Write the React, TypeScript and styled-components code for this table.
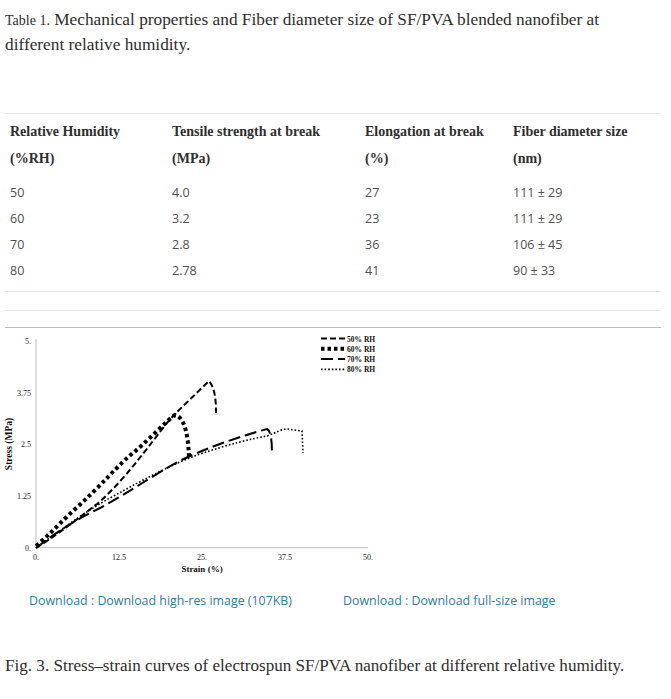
import React from "react";
import styled, { createGlobalStyle } from "styled-components";

const GlobalStyle = createGlobalStyle`
  html, body { margin: 0; padding: 0; background: #ffffff; }
  body { font-family: "Liberation Serif", serif; }
`;

const Page = styled.div`
  width: 671px;
  box-sizing: border-box;
  padding: 8px 10px 0 5px;
`;

const Title = styled.p`
  margin: 0;
  max-width: 625px;
  font-family: "Liberation Serif", serif;
  font-size: 17.3px;
  line-height: 24px;
  color: #2e2e2e;
`;

const TitleLabel = styled.span`
  font-size: 14px;
`;

const Table = styled.div`
  margin-top: 56px;
  border-top: 1px solid #e6e6e6;
  border-bottom: 1px solid #e6e6e6;
  display: grid;
  grid-template-columns: 162px 193px 148px 1fr;
  padding: 4px 0 7px;
`;

const HeadCell = styled.div`
  padding: 0 5px;
  font-family: "Liberation Serif", serif;
  font-weight: bold;
  font-size: 14px;
  color: #2e2e2e;
  height: 27px;
  line-height: 27px;
`;

const HeadGap = styled.div`
  grid-column: 1 / -1;
  height: 8px;
`;

const Cell = styled.div`
  padding: 0 5px;
  font-family: "Open Sans", sans-serif;
  font-size: 12.5px;
  color: #505050;
  height: 26px;
  line-height: 26px;
`;

const Rule = styled.div<{ $tone: string; $gap: number }>`
  margin-top: ${(p) => p.$gap}px;
  border-top: 1px solid ${(p) => p.$tone};
`;

const Figure = styled.div`
  padding-top: 3px;
`;

const Chart = styled.svg`
  display: block;
  overflow: visible;
`;

const Links = styled.div`
  display: flex;
  gap: 51px;
  padding: 9px 0 0 24px;
`;

const Link = styled.a`
  font-family: "Open Sans", sans-serif;
  font-size: 12.4px;
  color: #2e7ca3;
  text-decoration: none;
`;

const Caption = styled.p`
  margin: 45px 0 0;
  font-family: "Liberation Serif", serif;
  font-size: 17.1px;
  line-height: 24px;
  color: #2e2e2e;
`;

const X0 = 36;
const Y0 = 546.7;
const px = (u: number) => X0 + u * 6.64;
const py = (v: number) => Y0 - v * 41.3;

const headers: [string, string][] = [
  ["Relative Humidity", "(%RH)"],
  ["Tensile strength at break", "(MPa)"],
  ["Elongation at break", "(%)"],
  ["Fiber diameter size", "(nm)"],
];

const rows = [
  ["50", "4.0", "27", "111 ± 29"],
  ["60", "3.2", "23", "111 ± 29"],
  ["70", "2.8", "36", "106 ± 45"],
  ["80", "2.78", "41", "90 ± 33"],
];

const xTicks = ["0.", "12.5", "25.", "37.5", "50."];
const yTicks = ["0.", "1.25", "2.5", "3.75", "5."];

const series = [
  {
    label: "50% RH",
    d: "M36,547 C60,532 80,516 97,503 C130,475 160,428 175,413 L209,380 C214,386 216,395 216,412",
    w: 2,
    dash: "6 3",
  },
  {
    label: "60% RH",
    d: "M36,545 C50,533 62,520 73,510 C100,486 120,462 133,452 C150,438 165,421 175,414 C183,416 188,428 189,457",
    w: 4,
    dash: "3.5 3",
  },
  {
    label: "70% RH",
    d: "M36,547 C60,528 80,517 100,507 C140,485 165,466 190,455 C220,442 245,434 267,428 C271,430 272,440 272,454",
    w: 2,
    dash: "12 5",
  },
  {
    label: "80% RH",
    d: "M36,547 C70,522 90,508 110,497 C150,475 175,462 200,453 C230,443 250,438 267,435 C277,431 282,428 287,428 L302,430 L303,452",
    w: 1.6,
    dash: "1.6 2",
  },
];

const FigureChart: React.FC = () => (
  <Chart width={400} height={252} viewBox="5 330 400 252">
    <line x1={X0} y1={338} x2={X0} y2={Y0} stroke="#bdbdbd" strokeWidth={1} />
    <line x1={X0} y1={Y0} x2={368} y2={Y0} stroke="#bdbdbd" strokeWidth={1} />
    {yTicks.map((t, i) => (
      <text
        key={t}
        x={31}
        y={py(i * 1.25) + 3}
        fontSize={8}
        textAnchor="end"
        fontFamily="Liberation Serif, serif"
        fill="#222"
      >
        {t}
      </text>
    ))}
    {xTicks.map((t, i) => (
      <text
        key={t}
        x={px(i * 12.5)}
        y={559}
        fontSize={8}
        textAnchor="middle"
        fontFamily="Liberation Serif, serif"
        fill="#222"
      >
        {t}
      </text>
    ))}
    <text
      x={202}
      y={571}
      fontSize={9}
      fontWeight="bold"
      textAnchor="middle"
      fontFamily="Liberation Serif, serif"
      fill="#111"
    >
      Strain (%)
    </text>
    <text
      transform="translate(12,443) rotate(-90)"
      fontSize={9.5}
      fontWeight="bold"
      textAnchor="middle"
      fontFamily="Liberation Serif, serif"
      fill="#111"
    >
      Stress (MPa)
    </text>
    {series.map((s) => (
      <path
        key={s.label}
        d={s.d}
        fill="none"
        stroke="#000"
        strokeWidth={s.w}
        strokeDasharray={s.dash}
      />
    ))}
    {series.map((s, i) => (
      <g key={"lg" + s.label}>
        <line
          x1={321}
          y1={337.5 + i * 10.3}
          x2={345}
          y2={337.5 + i * 10.3}
          stroke="#000"
          strokeWidth={s.w}
          strokeDasharray={s.dash}
        />
        <text
          x={347}
          y={340.5 + i * 10.3}
          fontSize={7.5}
          fontWeight="bold"
          fontFamily="Liberation Serif, serif"
          fill="#111"
        >
          {s.label}
        </text>
      </g>
    ))}
  </Chart>
);

export default function App() {
  return (
    <>
      <GlobalStyle />
      <Page>
        <Title>
          <TitleLabel>Table 1.</TitleLabel> Mechanical properties and Fiber diameter size of
          SF/PVA blended nanofiber at different relative humidity.
        </Title>
        <Table>
          {headers.map((h) => (
            <HeadCell key={h[0]}>{h[0]}</HeadCell>
          ))}
          {headers.map((h) => (
            <HeadCell key={h[1]}>{h[1]}</HeadCell>
          ))}
          <HeadGap />
          {rows.map((r) =>
            r.map((c, j) => <Cell key={r[0] + "-" + j}>{c}</Cell>)
          )}
        </Table>
        <Rule $tone="#e6e6e6" $gap={18} />
        <Rule $tone="#bcbcbc" $gap={16} />
        <Figure>
          <FigureChart />
        </Figure>
        <Links>
          <Link href="#">Download : Download high-res image (107KB)</Link>
          <Link href="#">Download : Download full-size image</Link>
        </Links>
        <Caption>
          Fig. 3. Stress–strain curves of electrospun SF/PVA nanofiber at different relative
          humidity.
        </Caption>
      </Page>
    </>
  );
}
